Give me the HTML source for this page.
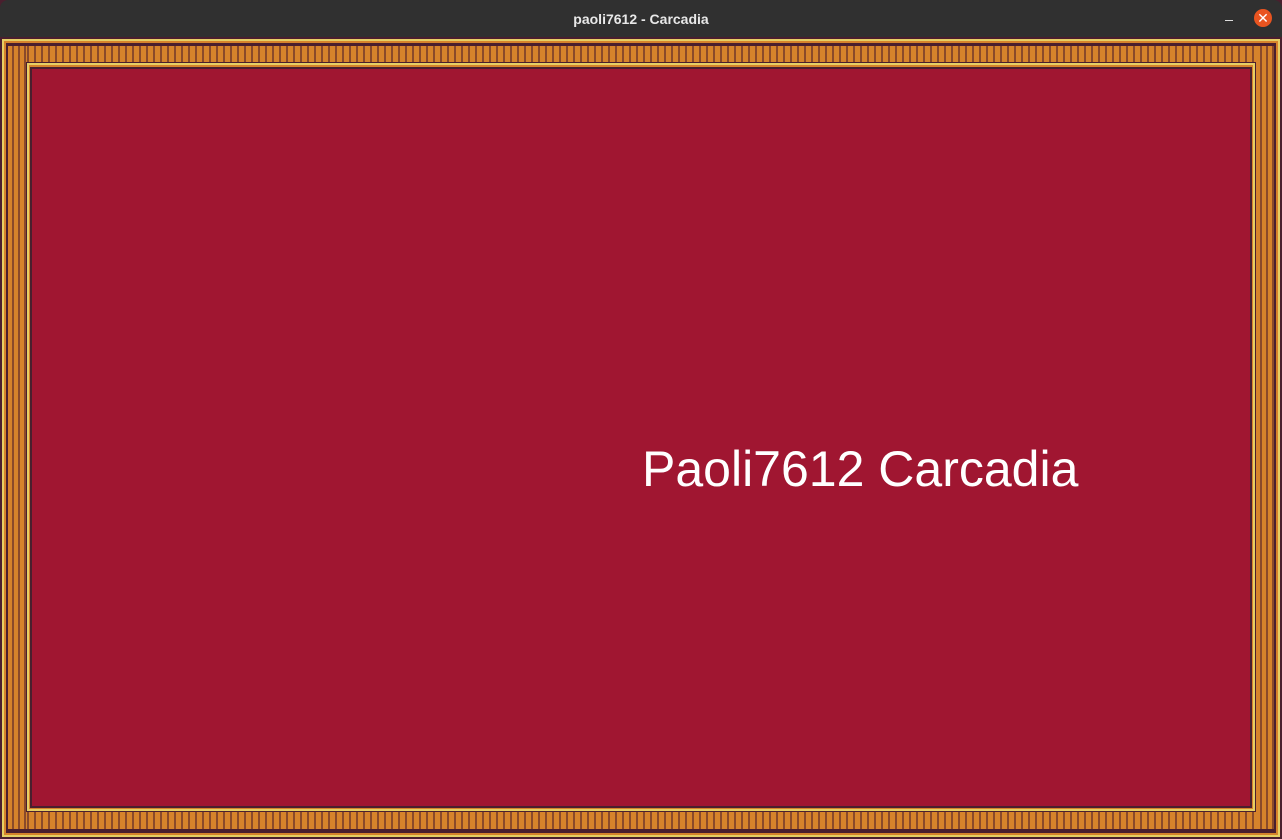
<!DOCTYPE html>
<html><head><style>
html,body{margin:0;padding:0;width:1282px;height:839px;overflow:hidden;background:#4a1f2e;font-family:"Liberation Sans",sans-serif}
.tb{position:absolute;left:0;top:0;width:1282px;height:37px;background:#303030;border-radius:8px 8px 0 0}
.tt{position:absolute;left:0;width:1282px;top:11px;text-align:center;color:#e8e8e8;font-weight:bold;font-size:14px}
.min{position:absolute;left:1225px;top:20px;width:8px;height:1px;background:#ddd}
.cl{position:absolute;left:1254px;top:9px;width:18px;height:18px;border-radius:50%;background:#e95420;color:#fff;font-size:14px;line-height:18px;text-align:center}
.b{position:absolute}
.h{background:repeating-linear-gradient(90deg,#d6832b 0 5px,#8a4a2a 5px 7px)}
.v{background:repeating-linear-gradient(90deg,#d6832b 0 4px,#8a4a2a 4px 6px)}
</style></head><body>
<div class="tb"><div class="tt">paoli7612 - Carcadia</div><div class="min"></div><div class="cl">✕</div></div>
<div class="b" style="left:2px;top:39px;width:1278px;height:798px;background:#e6cf64"></div>
<div class="b" style="left:4px;top:41px;width:1274px;height:794px;background:#d6832b"></div>
<div class="b" style="left:6px;top:43px;width:1270px;height:790px;background:#4a1f2e"></div>
<div class="b h" style="left:8px;top:46px;width:1266px;height:16px"></div>
<div class="b h" style="left:8px;top:812px;width:1266px;height:17px"></div>
<div class="b v" style="left:8px;top:46px;width:18px;height:783px"></div>
<div class="b v" style="left:1256px;top:46px;width:18px;height:783px"></div>
<div class="b" style="left:26px;top:62px;width:1230px;height:750px;background:#4a1f2e"></div>
<div class="b" style="left:27px;top:63px;width:1228px;height:748px;background:#e6cf64"></div>
<div class="b" style="left:29px;top:65px;width:1224px;height:744px;background:#d6832b"></div>
<div class="b" style="left:30px;top:67px;width:1222px;height:741px;background:#4a1f2e"></div>
<div class="b" style="left:32px;top:69px;width:1218px;height:737px;background:#a01631"></div>
<div class="b" style="left:642px;top:441px;color:#fff;font-size:50px;line-height:56px;white-space:nowrap">Paoli7612 Carcadia</div>
</body></html>
